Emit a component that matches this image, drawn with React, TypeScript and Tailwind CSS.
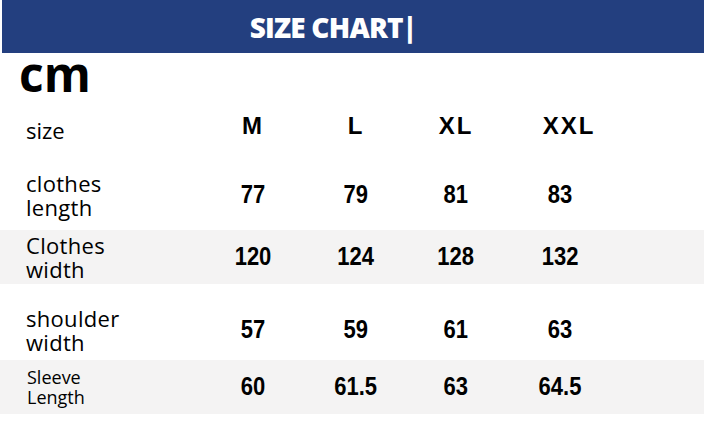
const cols = ["M", "L", "XL", "XXL"];

const rows = [
  { label: ["clothes", "length"], values: ["77", "79", "81", "83"], h: "h-[72px] pt-[2px]", band: false, small: false },
  { label: ["Clothes", "width"], values: ["120", "124", "128", "132"], h: "h-[54px]", band: true, small: false },
  { label: ["shoulder", "width"], values: ["57", "59", "61", "63"], h: "h-[76px] pt-[16px]", band: false, small: false },
  { label: ["Sleeve", "Length"], values: ["60", "61.5", "63", "64.5"], h: "h-[54px]", band: true, small: true },
];

const valueShift = ["", "pl-[6px]", "pl-[6px]", "pl-[16px]"];
const headShift = ["", "pl-[6px]", "pl-[6px]", "pl-[32px]"];

export default function App() {
  return (
    <div className="w-[704px] h-[421px] bg-white overflow-hidden text-black" style={{ fontFamily: '"Open Sans", sans-serif' }}>
      <div className="ml-[2px] h-[53px] bg-[#233f7f] flex items-center justify-center">
        <span
          className="text-white text-[28px] font-extrabold tracking-[-0.8px] pr-[40px] pt-[1px]"
          style={{ fontFamily: '"Open Sans", sans-serif' }}
        >
          SIZE CHART|
        </span>
      </div>

      <div className="h-[47px] pl-[19px] flex items-center">
        <span className="text-[48px] font-bold leading-none pb-[6px]" style={{ fontFamily: '"Open Sans", sans-serif' }}>
          cm
        </span>
      </div>

      <div className="flex h-[58px] items-center pb-[6px]">
        <div className="w-[203px] pl-[26px] text-[22px] pt-[8px]">size</div>
        {cols.map((c, i) => (
          <div
            key={c}
            className={`w-[100px] text-center text-[24px] font-bold tracking-[2px] ${headShift[i]}`}
            style={{ fontFamily: '"Liberation Sans", Arial, sans-serif' }}
          >
            {c}
          </div>
        ))}
      </div>

      {rows.map((r) => (
        <div key={r.label[0]} className={`flex items-center ${r.h} ${r.band ? "bg-[#f4f3f3]" : ""}`}>
          <div
            className={`w-[203px] pl-[26px] ${r.small ? "text-[18px] leading-[20px] pl-[27px]" : "text-[22px] leading-[24px] tracking-[0.3px]"}`}
          >
            <div>{r.label[0]}</div>
            <div>{r.label[1]}</div>
          </div>
          {r.values.map((v, i) => (
            <div
              key={i}
              className={`w-[100px] text-center text-[25px] font-bold ${valueShift[i]}`}
              style={{ fontFamily: '"Liberation Sans Narrow", "Liberation Sans", Arial, sans-serif', transform: "scaleX(0.88)" }}
            >
              {v}
            </div>
          ))}
        </div>
      ))}
    </div>
  );
}
